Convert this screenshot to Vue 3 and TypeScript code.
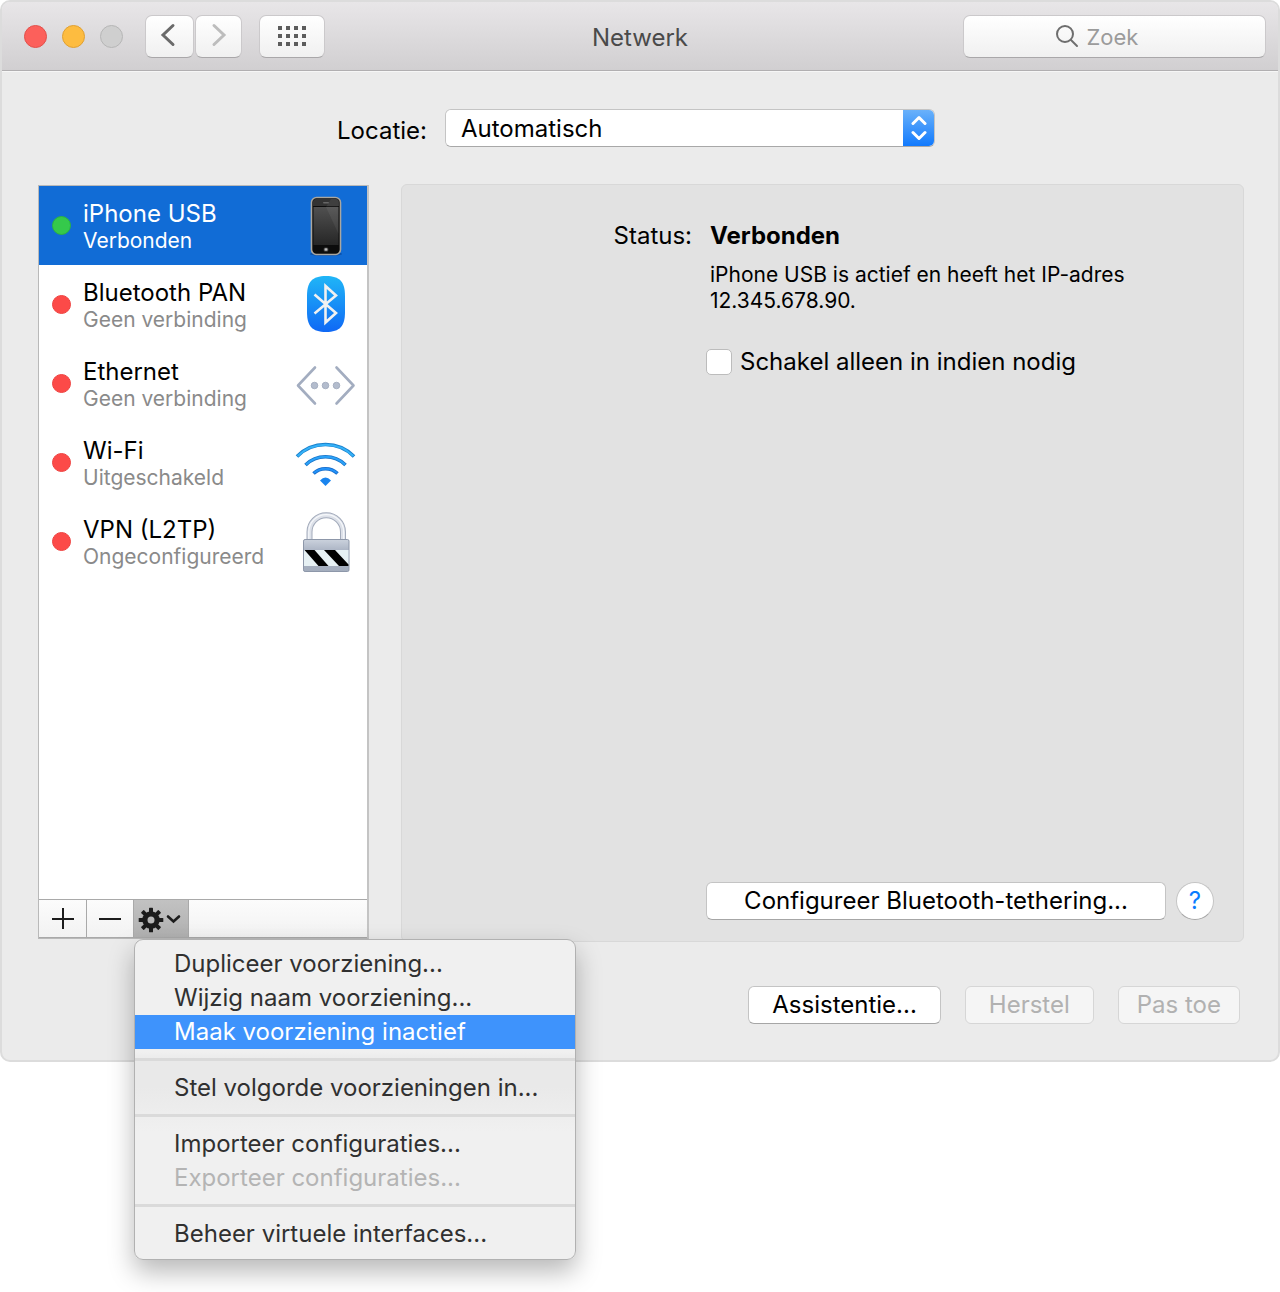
<script setup lang="ts">
import { ref } from 'vue'

type IconName = 'phone' | 'bluetooth' | 'ethernet' | 'wifi' | 'lock'

interface Service {
  name: string
  status: string
  icon: IconName
  connected: boolean
}

interface MenuEntry {
  label: string
  disabled?: boolean
  active?: boolean
}

const services: Service[] = [
  { name: 'iPhone USB', status: 'Verbonden', icon: 'phone', connected: true },
  { name: 'Bluetooth PAN', status: 'Geen verbinding', icon: 'bluetooth', connected: false },
  { name: 'Ethernet', status: 'Geen verbinding', icon: 'ethernet', connected: false },
  { name: 'Wi-Fi', status: 'Uitgeschakeld', icon: 'wifi', connected: false },
  { name: 'VPN (L2TP)', status: 'Ongeconfigureerd', icon: 'lock', connected: false },
]

const menuGroups: MenuEntry[][] = [
  [
    { label: 'Dupliceer voorziening...' },
    { label: 'Wijzig naam voorziening...' },
    { label: 'Maak voorziening inactief', active: true },
  ],
  [{ label: 'Stel volgorde voorzieningen in...' }],
  [{ label: 'Importeer configuraties...' }, { label: 'Exporteer configuraties...', disabled: true }],
  [{ label: 'Beheer virtuele interfaces...' }],
]

const teeth = [0, 45, 90, 135, 180, 225, 270, 315]
const selected = ref('iPhone USB')
const location = ref('Automatisch')
const onDemand = ref(false)
const query = ref('')
</script>

<template>
  <div class="desktop">
    <main class="window">
      <header class="titlebar">
        <div class="left-tools">
          <div class="lights">
            <button class="light red" type="button" aria-label="Sluit"></button>
            <button class="light yellow" type="button" aria-label="Minimaliseer"></button>
            <button class="light grey" type="button" aria-label="Vergroot" disabled></button>
          </div>
          <nav class="history">
            <button class="tool back" type="button" aria-label="Vorige">
              <svg width="16" height="26" viewBox="0 0 16 26"><path d="M13 3.500 3 13l10 9.500" fill="none" stroke="#6a6a6a" stroke-width="3" stroke-linecap="round" /></svg>
            </button>
            <button class="tool forward" type="button" aria-label="Volgende" disabled>
              <svg width="16" height="26" viewBox="0 0 16 26"><path d="M3 3.500l10 9.500L3 22.500" fill="none" stroke="#bdbdbd" stroke-width="3" stroke-linecap="round" /></svg>
            </button>
          </nav>
          <button class="tool all" type="button" aria-label="Toon alles">
            <svg width="28" height="20" viewBox="0 0 28 20" fill="#5c5c5c">
              <template v-for="r in 3" :key="r">
                <rect v-for="c in 4" :key="c" :x="(c - 1) * 8" :y="(r - 1) * 8" width="4" height="4" />
              </template>
            </svg>
          </button>
        </div>
        <h1>Netwerk</h1>
        <label class="search">
          <svg width="24" height="24" viewBox="0 0 24 24" fill="none" stroke="#6e6e6e" stroke-width="2" stroke-linecap="round"><circle cx="10" cy="10" r="8" /><path d="M16 16l6 6" /></svg>
          <input v-model="query" type="text" placeholder="Zoek" aria-label="Zoek" />
        </label>
      </header>

      <div class="content">
        <div class="location">
          <label for="location">Locatie:</label>
          <div class="popup">
            <select id="location" v-model="location">
              <option>Automatisch</option>
            </select>
            <span class="stepper">
              <svg width="16" height="26" viewBox="0 0 16 26" fill="none" stroke="#fff" stroke-width="3" stroke-linecap="round" stroke-linejoin="round"><path d="M2 8.500l6-6 6 6M2 17.500l6 6 6-6" /></svg>
            </span>
          </div>
        </div>

        <div class="columns">
          <section class="sidebar">
            <ul class="services">
              <li v-for="s in services" :key="s.name">
                <button class="service" type="button" :class="{ selected: selected === s.name }" @click="selected = s.name">
                  <span class="dot" :class="{ on: s.connected }"></span>
                  <span class="names">
                    <span class="name">{{ s.name }}</span>
                    <span class="state">{{ s.status }}</span>
                  </span>
                  <svg class="icon" viewBox="0 0 64 64">
                    <template v-if="s.icon === 'phone'">
                      <defs>
                        <linearGradient id="screen" x1="0" y1="0" x2="0" y2="1"><stop offset="0" stop-color="#505050" /><stop offset="1" stop-color="#262626" /></linearGradient>
                      </defs>
                      <ellipse cx="32" cy="60" rx="16" ry="2" fill="#0a4fa8" />
                      <rect x="17.500" y="3.500" width="29" height="57" rx="5" fill="#0c0c0c" stroke="#aaa7a0" stroke-width="1.600" />
                      <path d="M19 12V8q0-3 3-3h20q3 0 3 3v4z" fill="#333" />
                      <rect x="19.500" y="13" width="25" height="38" fill="url(#screen)" />
                      <path d="M44.500 6v34L32 13l5-8h6z" fill="#fff" opacity=".06" />
                      <rect x="29" y="8" width="6" height="1.600" rx=".8" fill="#666" />
                      <circle cx="32" cy="55.500" r="2.600" fill="#2a2a2a" />
                      <rect x="30.500" y="54.200" width="3" height="2.600" rx=".6" fill="#bbb" />
                    </template>
                    <template v-else-if="s.icon === 'bluetooth'">
                      <defs>
                        <linearGradient id="blue" x1="0" y1="0" x2="0" y2="1"><stop offset="0" stop-color="#20b6f7" /><stop offset="1" stop-color="#0f68f5" /></linearGradient>
                      </defs>
                      <path d="M32 3c14 0 19 6 19 20v16c0 14-5 20-19 20s-19-6-19-20V23C13 9 18 3 32 3z" fill="url(#blue)" />
                      <path d="M20.500 21.500L42 40 31.500 49.500V13L42 22.500l-21.500 18" fill="none" stroke="#f1f1f1" stroke-width="2.600" />
                    </template>
                    <template v-else-if="s.icon === 'ethernet'">
                      <g fill="none" stroke="#a3adc0" stroke-width="2.600" stroke-linecap="round" stroke-linejoin="round"><path d="M21 15.500L4 33.500l17 18" /><path d="M42.500 15.500l17 18-17 18" /></g>
                      <g fill="#b3bccd" stroke="#9da7ba" stroke-width=".8"><circle cx="20.500" cy="33.500" r="3.300" /><circle cx="31.500" cy="33.500" r="3.300" /><circle cx="42.500" cy="33.500" r="3.300" /></g>
                    </template>
                    <template v-else-if="s.icon === 'wifi'">
                      <g fill="none">
                        <path d="M3 25.500a40 40 0 0 1 57 0" stroke="#1a80cc" stroke-width="3.600" />
                        <path d="M3.600 25a40 40 0 0 1 55.800 0" stroke="#35b2f8" stroke-width="2" />
                        <path d="M11.500 34a28.500 28.500 0 0 1 40 0" stroke="#1974c8" stroke-width="3.600" />
                        <path d="M12 33.500a28.500 28.500 0 0 1 39 0" stroke="#2ba2f8" stroke-width="2" />
                        <path d="M19.500 42.500a17.500 17.500 0 0 1 24 0" stroke="#166bc9" stroke-width="3.600" />
                        <path d="M20 42a17.500 17.500 0 0 1 23 0" stroke="#2392f8" stroke-width="2" />
                      </g>
                      <path d="M26 49.500q5.500-6 11 0L31.500 55z" fill="#1a84ee" />
                    </template>
                    <template v-else>
                      <defs>
                        <linearGradient id="metal" x1="0" y1="0" x2="0" y2="1"><stop offset="0" stop-color="#cbd2dd" /><stop offset=".35" stop-color="#abb4c4" /><stop offset="1" stop-color="#a3adbd" /></linearGradient>
                      </defs>
                      <path d="M15.500 30V22a16.750 16.750 0 0 1 33.500 0v8" fill="none" stroke="#a3abbb" stroke-width="6" />
                      <path d="M15.500 30V22a16.750 16.750 0 0 1 33.500 0v8" fill="none" stroke="#dde1e9" stroke-width="4" />
                      <path d="M14.800 30V22a17.450 17.450 0 0 1 34.900 0v8" fill="none" stroke="#f6f8fb" stroke-width="1.200" />
                      <rect x="9.500" y="29.500" width="45.500" height="32" rx="1.600" fill="url(#metal)" stroke="#8d97a9" />
                      <rect x="10" y="40" width="44.500" height="16" fill="#e6f0f3" />
                      <path d="M10.500 40h10l14 16h-10zM30 40h11l13.500 14.500V56H45z" fill="#000" />
                    </template>
                  </svg>
                </button>
              </li>
            </ul>
            <div class="toolbar">
              <button type="button" class="cell" aria-label="Voeg toe">
                <svg width="24" height="24" viewBox="0 0 24 24" stroke="#1c1c1c" stroke-width="2"><path d="M12 1v21M1 12h22" /></svg>
              </button>
              <button type="button" class="cell" aria-label="Verwijder">
                <svg width="24" height="24" viewBox="0 0 24 24" stroke="#1c1c1c" stroke-width="2"><path d="M1 12h22" /></svg>
              </button>
              <div class="action">
                <button type="button" class="gear" aria-label="Acties" aria-haspopup="menu" aria-expanded="true">
                  <svg width="46" height="26" viewBox="0 0 46 26">
                    <g transform="translate(13 13)" fill="#1c1c1c">
                      <rect v-for="a in teeth" :key="a" x="-2" y="-12.300" width="4" height="5" rx=".6" :transform="`rotate(${a})`" />
                      <circle r="6.100" fill="none" stroke="#1c1c1c" stroke-width="5.200" />
                    </g>
                    <path d="M30 9.500l5.500 5 5.500-5" fill="none" stroke="#1c1c1c" stroke-width="2.600" stroke-linecap="round" />
                  </svg>
                </button>
                <div class="menu" role="menu">
                  <div v-for="(group, i) in menuGroups" :key="i" class="group" role="group">
                    <button
                      v-for="m in group"
                      :key="m.label"
                      class="entry"
                      :class="{ active: m.active }"
                      type="button"
                      role="menuitem"
                      :disabled="m.disabled"
                    >{{ m.label }}</button>
                  </div>
                </div>
              </div>
            </div>
          </section>

          <section class="panel">
            <dl class="status">
              <dt>Status:</dt>
              <dd>
                <strong>Verbonden</strong>
                <p>iPhone USB is actief en heeft het IP-adres<br />12.345.678.90.</p>
              </dd>
            </dl>
            <label class="check">
              <input v-model="onDemand" type="checkbox" />
              <span>Schakel alleen in indien nodig</span>
            </label>
            <div class="panel-foot">
              <button type="button" class="push wide">Configureer Bluetooth-tethering...</button>
              <button type="button" class="help" aria-label="Help">?</button>
            </div>
          </section>
        </div>

        <footer class="actions">
          <button type="button" class="push">Assistentie...</button>
          <button type="button" class="push" disabled>Herstel</button>
          <button type="button" class="push compact" disabled>Pas toe</button>
        </footer>
      </div>
    </main>
  </div>
</template>

<style>
body {
  margin: 0;
  background: #fff;
}
</style>

<style scoped>
* {
  box-sizing: border-box;
}

/* Leaves room below the window for the open menu and its shadow. */
.desktop {
  min-height: 100vh;
  padding-bottom: 230px;
}

.window {
  font: 24px/32px Inter, "Liberation Sans", sans-serif;
  color: #000;
  background: #ebebeb;
  border: 2px solid #dcdcdc;
  border-radius: 10px;
}

button,
input,
select {
  font: inherit;
  color: inherit;
  margin: 0;
  padding: 0;
  border: 0;
}

svg {
  display: block;
  flex: none;
}

.titlebar {
  display: grid;
  grid-template-columns: 1fr auto 1fr;
  align-items: center;
  height: 69px;
  padding: 0 12px;
  background: linear-gradient(#e8e6e8, #d1cfd1);
  border-bottom: 1px solid #b1afb1;
  border-radius: 8px 8px 0 0;
  box-shadow: 0 1px #f6f6f6;
}

.left-tools,
.lights,
.history {
  display: flex;
  align-items: center;
}

.lights {
  gap: 15px;
  margin: 0 22px 0 10px;
}

.light {
  width: 23px;
  height: 23px;
  border-radius: 50%;
}

.red {
  background: #fc605b;
  border: 1px solid #e2504b;
}

.yellow {
  background: #fdbc40;
  border: 1px solid #e0a032;
}

.grey {
  background: #cfcfcf;
  border: 1px solid #b6b6b6;
}

.history {
  gap: 1px;
  margin-right: 17px;
}

.tool,
.search {
  display: flex;
  align-items: center;
  justify-content: center;
  height: 43px;
  border: 1px solid #cbc9cb;
  border-bottom-color: #a9a7a9;
  border-radius: 7px;
  background: linear-gradient(#fff, #f0f0f0);
}

.back {
  width: 49px;
  padding: 0 4px 2px 0;
}

.forward {
  width: 47px;
  padding-bottom: 2px;
}

.all {
  width: 66px;
}

h1 {
  margin: 0;
  padding-top: 4px;
  font: inherit;
  color: #4a4a4a;
}

.search {
  justify-self: end;
  width: 303px;
  gap: 8px;
}

.search input {
  width: 88px;
  padding-top: 2px;
  font-size: 22px;
  background: none;
  outline: 0;
}

.search input::placeholder {
  color: #9b9b9b;
  opacity: 1;
}

.content {
  padding: 38px 34px 36px 36px;
}

.location {
  display: flex;
  justify-content: center;
  align-items: flex-start;
  gap: 18px;
  height: 38px;
  margin: 0 10px 37px 0;
}

.location label {
  padding-top: 6px;
}

.popup {
  display: flex;
  width: 490px;
  height: 38px;
  border-radius: 6px;
  overflow: hidden;
  background: #fff;
  border: 1px solid #c4c4c4;
  border-bottom-color: #a8a8a8;
  position: relative;
}

.popup select {
  flex: 1;
  appearance: none;
  padding: 2px 0 0 15px;
  background: #fff;
  outline: 0;
}

.stepper {
  position: absolute;
  top: -1px;
  right: -1px;
  bottom: -1px;
  width: 32px;
  display: flex;
  align-items: center;
  justify-content: center;
  background: linear-gradient(#6cb3fa, #0f78fd);
  pointer-events: none;
}

.columns {
  display: flex;
  gap: 32px;
  min-height: 758px;
}

.sidebar {
  display: flex;
  flex-direction: column;
  width: 331px;
  margin: 1px 0 3px;
  border: 1px solid #b9b9b9;
  border-right-width: 2px;
  border-right-color: #c4c4c4;
  background: #fff;
}

.services {
  flex: 1;
  margin: 0;
  padding: 0;
  list-style: none;
}

.service {
  display: flex;
  align-items: center;
  width: 100%;
  height: 79px;
  padding: 0 9px 0 13px;
  background: none;
  text-align: left;
}

.service.selected {
  background: #116cd6;
  color: #fff;
}

.dot {
  width: 19px;
  height: 19px;
  margin-right: 12px;
  border-radius: 50%;
  background: #fc4a48;
  border: 1px solid #ef4341;
}

.dot.on {
  background: #35c94b;
  border-color: #2cb441;
}

.names {
  flex: 1;
  display: flex;
  flex-direction: column;
  padding-top: 2px;
}

.name {
  line-height: 29px;
}

.state {
  font-size: 21px;
  line-height: 26px;
  color: #8a8a8a;
}

.selected .state {
  color: #fff;
}

.icon {
  width: 64px;
  height: 64px;
}

.toolbar {
  display: flex;
  height: 39px;
  border-top: 1px solid #a9a9a9;
  border-bottom: 1px solid #a9a9a9;
  background: linear-gradient(#fcfcfc, #f2f2f2);
}

.cell {
  display: flex;
  align-items: center;
  justify-content: center;
  width: 48px;
  border-right: 1px solid #a9a9a9;
  background: none;
}

.cell + .cell {
  width: 47px;
}

.action {
  display: flex;
  position: relative;
}

.gear {
  display: flex;
  align-items: center;
  justify-content: center;
  width: 55px;
  padding-top: 2px;
  background: linear-gradient(#c2c2c2, #b0b0b0);
  border-right: 1px solid #a9a9a9;
}

.menu {
  position: absolute;
  z-index: 1;
  top: 39px;
  left: 0;
  width: 442px;
  padding: 7px 0 8px;
  background: linear-gradient(#f0f0f0 35%, #e9e9e9 38%, #e9e9e9 46%, #f0f0f0 60%);
  border: 1px solid #b1b1b1;
  border-radius: 9px;
  box-shadow: 0 12px 26px rgba(0, 0, 0, 0.28);
}

.group {
  display: flex;
  flex-direction: column;
}

.group + .group {
  margin-top: 9px;
  padding-top: 10px;
  border-top: 3px solid #dadada;
}

.entry {
  height: 34px;
  padding-left: 39px;
  background: none;
  color: #303030;
  text-align: left;
  white-space: nowrap;
}

.entry.active {
  background: #3e93fc;
  color: #fff;
}

.entry:disabled {
  color: #b4b4b4;
}

.panel {
  flex: 1;
  display: flex;
  flex-direction: column;
  padding: 35px 29px 21px 0;
  background: #e2e2e2;
  border: 1px solid #d8d8d8;
  border-radius: 6px;
}

.status {
  display: flex;
  gap: 18px;
  margin: 0;
}

dt {
  width: 290px;
  text-align: right;
}

dd {
  margin: 0;
}

strong {
  display: block;
  font-weight: 700;
}

dd p {
  margin: 10px 0 0;
  font-size: 21px;
  line-height: 26px;
}

.check {
  display: flex;
  align-items: center;
  gap: 8px;
  margin: 32px 0 0 304px;
}

.check input {
  appearance: none;
  width: 26px;
  height: 26px;
  background: #fff;
  border: 1px solid #bcbcbc;
  border-radius: 5px;
}

.panel-foot {
  display: flex;
  justify-content: flex-end;
  gap: 10px;
  margin-top: auto;
}

.push {
  height: 38px;
  padding: 0 23px;
  background: #fff;
  border: 1px solid #c4c4c4;
  border-bottom-color: #a6a6a6;
  border-radius: 6px;
}

.push.wide {
  width: 460px;
}

.push.compact {
  padding: 0 18px;
}

.push:disabled {
  color: #b1b1b1;
  background: #f5f5f5;
  border-color: #d6d6d6;
}

.help {
  width: 38px;
  height: 38px;
  border: 1px solid #c4c4c4;
  border-bottom-color: #a6a6a6;
  border-radius: 50%;
  background: #fff;
  color: #0a7cff;
}

.actions {
  display: flex;
  justify-content: flex-end;
  gap: 24px;
  margin: 44px 4px 0 0;
}
</style>
